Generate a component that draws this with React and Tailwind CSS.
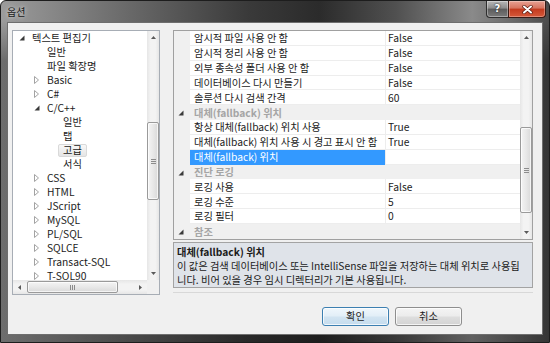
import React from 'react';

const FONT = "font-['Noto_Sans_CJK_KR','Noto_Sans',sans-serif]";

const TREE = [
  { label: '텍스트 편집기', level: 0, arrow: 'open' },
  { label: '일반', level: 1 },
  { label: '파일 확장명', level: 1 },
  { label: 'Basic', level: 1, arrow: 'closed' },
  { label: 'C#', level: 1, arrow: 'closed' },
  { label: 'C/C++', level: 1, arrow: 'open' },
  { label: '일반', level: 2 },
  { label: '탭', level: 2 },
  { label: '고급', level: 2, selected: true },
  { label: '서식', level: 2 },
  { label: 'CSS', level: 1, arrow: 'closed' },
  { label: 'HTML', level: 1, arrow: 'closed' },
  { label: 'JScript', level: 1, arrow: 'closed' },
  { label: 'MySQL', level: 1, arrow: 'closed' },
  { label: 'PL/SQL', level: 1, arrow: 'closed' },
  { label: 'SQLCE', level: 1, arrow: 'closed' },
  { label: 'Transact-SQL', level: 1, arrow: 'closed' },
  { label: 'T-SQL90', level: 1, arrow: 'closed' },
];

const LEVEL_PAD = ['w-[6px]', 'w-[21px]', 'w-[37px]'];

const ROWS = [
  { name: '암시적 파일 사용 안 함', value: 'False' },
  { name: '암시적 정리 사용 안 함', value: 'False' },
  { name: '외부 종속성 폴더 사용 안 함', value: 'False' },
  { name: '데이터베이스 다시 만들기', value: 'False' },
  { name: '솔루션 다시 검색 간격', value: '60' },
  { cat: '대체(fallback) 위치' },
  { name: '항상 대체(fallback) 위치 사용', value: 'True' },
  { name: '대체(fallback) 위치 사용 시 경고 표시 안 함', value: 'True' },
  { name: '대체(fallback) 위치', value: '', selected: true },
  { cat: '진단 로깅' },
  { name: '로깅 사용', value: 'False' },
  { name: '로깅 수준', value: '5' },
  { name: '로깅 필터', value: '0' },
  { cat: '참조' },
];

function Expanded() {
  return (
    <svg width="6" height="6" viewBox="0 0 6 6">
      <path d="M5.5 0.5 L5.5 5.5 L0.5 5.5 Z" fill="#3a3a3a" />
    </svg>
  );
}

function Collapsed() {
  return (
    <svg width="5" height="8" viewBox="0 0 5 8">
      <path d="M0.5 0.5 L4.5 4 L0.5 7.5 Z" fill="#fff" stroke="#a3a3a3" />
    </svg>
  );
}

function Tri({ dir }) {
  if (dir === 'up' || dir === 'down') {
    const d = dir === 'up' ? 'M0 3 L2.5 0 L5 3 Z' : 'M0 0 L5 0 L2.5 3 Z';
    return (
      <svg width="5" height="3" viewBox="0 0 5 3">
        <path d={d} fill="#5a5a5a" />
      </svg>
    );
  }
  const d = dir === 'left' ? 'M3 0 L3 5 L0 2.5 Z' : 'M0 0 L3 2.5 L0 5 Z';
  return (
    <svg width="3" height="5" viewBox="0 0 3 5">
      <path d={d} fill="#5a5a5a" />
    </svg>
  );
}

function VScroll({ before, thumb }) {
  return (
    <div className="flex w-[12px] flex-col bg-[linear-gradient(to_right,#e6e6e6,#f3f3f3_30%,#f3f3f3_70%,#e6e6e6)]">
      <div className="flex h-[13px] items-center justify-center">
        <Tri dir="up" />
      </div>
      <div className="flex flex-1 flex-col">
        <div className={before} />
        <div className={`${thumb} flex items-center justify-center rounded-[2px] border border-[#9a9a9a] bg-[linear-gradient(to_right,#f4f4f4,#e8e8e8_50%,#d9d9d9)] shadow-[inset_0_0_0_1px_rgba(255,255,255,0.7)]`}>
          <div className="flex flex-col gap-[1px]">
            <div className="h-px w-[5px] bg-[#8c8c8c]" />
            <div className="h-px w-[5px] bg-[#8c8c8c]" />
            <div className="h-px w-[5px] bg-[#8c8c8c]" />
          </div>
        </div>
      </div>
      <div className="flex h-[13px] items-center justify-center">
        <Tri dir="down" />
      </div>
    </div>
  );
}

function HScroll() {
  return (
    <div className="flex flex-1 bg-[linear-gradient(to_bottom,#e6e6e6,#f3f3f3_30%,#f3f3f3_70%,#e6e6e6)]">
      <div className="flex w-[13px] items-center justify-center">
        <Tri dir="left" />
      </div>
      <div className="flex flex-1 py-px">
        <div className="w-px" />
        <div className="flex w-[91px] items-center justify-center rounded-[2px] border border-[#9a9a9a] bg-[linear-gradient(to_bottom,#f4f4f4,#e8e8e8_50%,#d9d9d9)] shadow-[inset_0_0_0_1px_rgba(255,255,255,0.7)]">
          <div className="flex gap-[1px]">
            <div className="h-[5px] w-px bg-[#8c8c8c]" />
            <div className="h-[5px] w-px bg-[#8c8c8c]" />
            <div className="h-[5px] w-px bg-[#8c8c8c]" />
          </div>
        </div>
      </div>
      <div className="flex w-[13px] items-center justify-center">
        <Tri dir="right" />
      </div>
    </div>
  );
}

function Tree() {
  return (
    <div className="flex h-[265px] w-[148px] flex-col border border-[#a7adb5] bg-white">
      <div className="flex flex-1 overflow-hidden">
        <div className="flex flex-1 flex-col overflow-hidden">
          {TREE.map((item, i) => (
            <div key={i} className="flex h-[14px] shrink-0 items-center whitespace-nowrap leading-[14px]">
              <div className={`${LEVEL_PAD[item.level]} shrink-0`} />
              <div className="flex w-[13px] shrink-0 items-center">
                {item.arrow === 'open' && <Expanded />}
                {item.arrow === 'closed' && <Collapsed />}
              </div>
              {item.selected ? (
                <span className="-ml-[5px] flex h-[13px] items-center rounded-[2px] border border-[#d9d9d9] bg-[linear-gradient(to_bottom,#f8f8f8,#e5e5e5)] px-[4px]">
                  {item.label}
                </span>
              ) : (
                <span>{item.label}</span>
              )}
            </div>
          ))}
        </div>
        <VScroll before="h-[78px]" thumb="h-[78px]" />
      </div>
      <div className="flex h-[14px]">
        <HScroll />
        <div className="w-[12px] bg-[#f0f0f0]" />
      </div>
    </div>
  );
}

function Grid() {
  return (
    <div className="flex h-[210px] w-[360px] border border-[#a0a0a0] bg-white">
      <div className="flex flex-1 flex-col overflow-hidden">
        {ROWS.map((row, i) =>
          row.cat ? (
            <div key={i} className="flex h-[14.85px] shrink-0 items-center bg-[#f0f0f0] font-bold text-[#a5a5a5]">
              <div className="flex w-[16px] shrink-0 items-center pl-[4px] pt-[1px]">
                <Expanded />
              </div>
              <span className="pl-[4px] whitespace-nowrap">{row.cat}</span>
            </div>
          ) : (
            <div key={i} className="flex h-[14.85px] shrink-0">
              <div className="w-[16px] shrink-0 bg-[#f0f0f0]" />
              <div
                className={`flex w-[195px] shrink-0 items-center overflow-hidden whitespace-nowrap pl-[4px] ${
                  row.selected ? 'bg-[#3399ff] text-white' : 'border-b border-[#ededed] bg-white'
                }`}
              >
                {row.name}
              </div>
              <div className="flex flex-1 items-center border-b border-l border-[#ededed] bg-white pl-[2px]">
                {row.value}
              </div>
            </div>
          )
        )}
      </div>
      <VScroll before="h-[83px]" thumb="h-[86px]" />
    </div>
  );
}

function Button({ children, primary }) {
  return (
    <div
      className={`flex h-[19px] w-[67px] items-center justify-center rounded-[3px] border leading-none shadow-[inset_0_0_0_1px_rgba(255,255,255,0.75)] ${
        primary
          ? 'border-[#3c7fb1] bg-[linear-gradient(to_bottom,#f0f7fc_0%,#e2eef7_48%,#d2e4f1_52%,#c5dcee_100%)]'
          : 'border-[#8e8e8e] bg-[linear-gradient(to_bottom,#f4f4f4_0%,#ececec_48%,#dedede_52%,#d3d3d3_100%)]'
      }`}
    >
      {children}
    </div>
  );
}

export default function App() {
  return (
    <div
      className={`${FONT} flex h-[343px] w-[550px] flex-col overflow-hidden rounded-t-[6px] border border-[#1d1d1d] bg-[linear-gradient(to_bottom,rgba(0,0,0,0)_0px,rgba(0,0,0,0)_20px,rgba(0,0,0,0.3)_60px),linear-gradient(to_right,#9c9c9c_0%,#707070_20%,#3a3a3a_45%,#2b2b2b_58%,#505050_72%,#8a8a8a_86%,#4c4c4c_100%)] text-[10.25px] text-[#1b1b1b]`}
    >
      {/* title bar */}
      <div className="flex h-[21px] shrink-0 justify-between">
        <div className="flex items-center pl-[6px] text-[10px] text-[#1a1a1a] [text-shadow:0_0_4px_rgba(255,255,255,0.8)]">
          옵션
        </div>
        <div className="mr-[3px] flex items-start">
          <div className="flex h-[17px] w-[22px] items-center justify-center rounded-bl-[4px] border border-r-0 border-t-0 border-[#2e2e2e] bg-[linear-gradient(to_bottom,#b8b8b8_0%,#8c8c8c_45%,#5c5c5c_50%,#7a7a7a_100%)] shadow-[inset_0_0_0_1px_rgba(255,255,255,0.35)]">
            <span className="font-['DejaVu_Sans',sans-serif] text-[10px] font-bold leading-none text-white [text-shadow:0_0_2px_#000]">?</span>
          </div>
          <div className="flex h-[17px] w-[38px] items-center justify-center rounded-br-[4px] border border-t-0 border-[#3a1a14] bg-[linear-gradient(to_bottom,#e8a193_0%,#d6735e_45%,#c33a1e_50%,#d5593a_100%)] shadow-[inset_0_0_0_1px_rgba(255,255,255,0.3)]">
            <svg width="11" height="9" viewBox="0 0 11 9">
              <path d="M2 1.5 L9 7.5 M9 1.5 L2 7.5" stroke="#5a1a10" strokeWidth="3.4" strokeLinecap="round" />
              <path d="M2 1.5 L9 7.5 M9 1.5 L2 7.5" stroke="#fff" strokeWidth="2" strokeLinecap="round" />
            </svg>
          </div>
        </div>
      </div>

      {/* frame body */}
      <div className="flex flex-1 px-[6px] pb-[7px]">
        <div className="flex flex-1 flex-col border border-[#6e6e6e] bg-[#f0f0f0] pl-[4px] pt-[7px]">
          <div className="flex items-start gap-[13px]">
            <Tree />
            <div className="flex w-[360px] flex-col">
              <Grid />
              <div className="mt-[2px] h-[46px] border border-[#a3a3a3] bg-[#dfe3e9] px-[3px] pt-[2px] leading-[14px] whitespace-nowrap">
                <div className="font-bold">대체(fallback) 위치</div>
                <div>이 값은 검색 데이터베이스 또는 IntelliSense 파일을 저장하는 대체 위치로 사용됩</div>
                <div>니다. 비어 있을 경우 임시 디렉터리가 기본 사용됩니다.</div>
              </div>
              <div className="mt-[4px] h-px bg-[#d8d8d8]" />
            </div>
          </div>
          <div className="mt-[12px] flex justify-end gap-[6px] pr-[80px]">
            <Button primary>확인</Button>
            <Button>취소</Button>
          </div>
        </div>
      </div>
    </div>
  );
}
